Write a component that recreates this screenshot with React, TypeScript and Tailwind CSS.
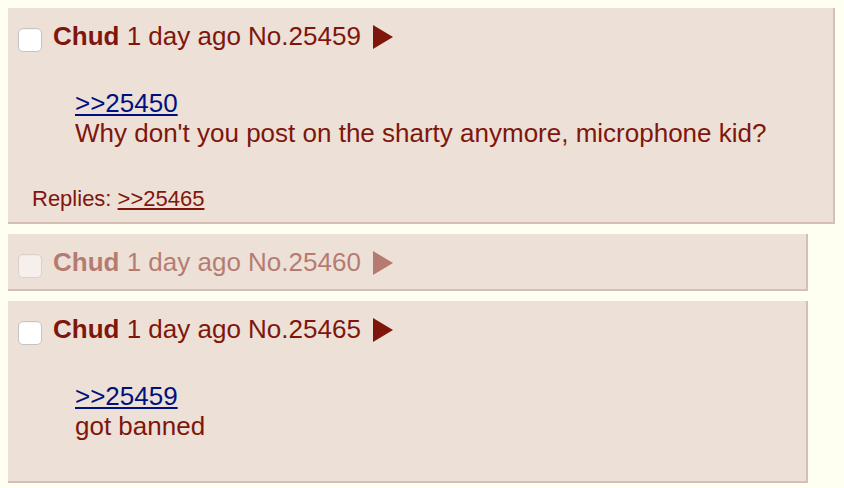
import React from "react";

function Checkbox() {
  return (
    <div className="ml-[10px] mt-[7px] h-[24px] w-[24px] shrink-0 rounded-[5px] border border-[#c6c3c1] bg-white shadow-[inset_0_1px_1px_rgba(0,0,0,0.04)]" />
  );
}

function Arrow() {
  return (
    <svg className="ml-[12px] mt-[4px] shrink-0" width="20" height="24" viewBox="0 0 20 24">
      <polygon points="0,0 20,12 0,24" fill="#7f160c" />
    </svg>
  );
}

function Header({ no }: { no: string }) {
  return (
    <div className="flex items-start h-[30px]">
      <Checkbox />
      <span className="ml-[11px] whitespace-nowrap text-[26px] leading-[30px] text-[#7f160c]">
        <span className="font-bold">Chud</span> 1 day ago No.{no}
      </span>
      <Arrow />
    </div>
  );
}

export default function App() {
  return (
    <div
      className="min-h-[488px] w-full bg-[#fefff0] pl-[8px] pt-[8px] text-[#7f160c]"
      style={{ fontFamily: '"Liberation Sans", Arial, Helvetica, sans-serif' }}
    >
      <div className="flex flex-col gap-[10px]">
        {/* Post 1 */}
        <div className="w-[827px] border-b-2 border-r-2 border-[#d5bfb5] bg-[#ede0d7] pt-[13px] pb-[11px]">
          <Header no="25459" />
          <div className="ml-[67px] mt-[37px] text-[26px] leading-[30px]">
            <a className="text-[#00107f] underline" href="#">&gt;&gt;25450</a>
            <div>Why don't you post on the sharty anymore, microphone kid?</div>
          </div>
          <div className="ml-[24px] mt-[38px] text-[22px] leading-[25px]">
            Replies: <a className="text-[#7f160c] underline" href="#">&gt;&gt;25465</a>
          </div>
        </div>

        {/* Post 2 (faded) */}
        <div className="w-[800px] border-b-2 border-r-2 border-[#d5bfb5] bg-[#ede0d7] pt-[13px] pb-[12px]">
          <div className="opacity-50">
            <Header no="25460" />
          </div>
        </div>

        {/* Post 3 */}
        <div className="w-[800px] border-b-2 border-r-2 border-[#d5bfb5] bg-[#ede0d7] pt-[13px] pb-[40px]">
          <Header no="25465" />
          <div className="ml-[67px] mt-[37px] text-[26px] leading-[30px]">
            <a className="text-[#00107f] underline" href="#">&gt;&gt;25459</a>
            <div>got banned</div>
          </div>
        </div>
      </div>
    </div>
  );
}
